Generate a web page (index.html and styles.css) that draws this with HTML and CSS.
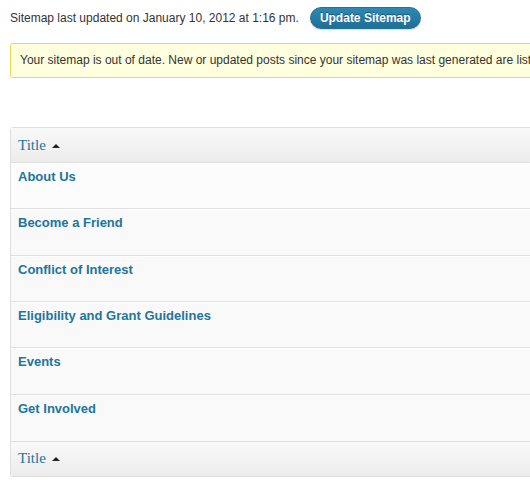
FILE: index.html
```html
<!DOCTYPE html>
<html>
<head>
<meta charset="utf-8">
<link rel="stylesheet" href="styles.css">
</head>
<body>
<div class="wrap">
  <div class="status">
    <span class="status-text">Sitemap last updated on January 10, 2012 at 1:16 pm.</span>
    <button class="btn-primary">Update Sitemap</button>
  </div>
  <div class="notice">Your sitemap is out of date. New or updated posts since your sitemap was last generated are listed below.</div>
  <table class="list">
    <thead>
      <tr><th><a href="#" class="sort">Title <span class="arrow"></span></a></th></tr>
    </thead>
    <tbody>
      <tr><td><a href="#" class="row-title">About Us</a></td></tr>
      <tr><td><a href="#" class="row-title">Become a Friend</a></td></tr>
      <tr><td><a href="#" class="row-title">Conflict of Interest</a></td></tr>
      <tr><td><a href="#" class="row-title">Eligibility and Grant Guidelines</a></td></tr>
      <tr><td><a href="#" class="row-title">Events</a></td></tr>
      <tr><td><a href="#" class="row-title">Get Involved</a></td></tr>
    </tbody>
    <tfoot>
      <tr><th><a href="#" class="sort">Title <span class="arrow"></span></a></th></tr>
    </tfoot>
  </table>
</div>
</body>
</html>
```
FILE: styles.css
```css
html, body {
  margin: 0;
  padding: 0;
  overflow: hidden;
  background: #fff;
}
body {
  font-family: "Liberation Sans", Arial, sans-serif;
  font-size: 12px;
  color: #333;
}
.wrap {
  width: 800px;
  padding-left: 10px;
}
.status {
  display: flex;
  align-items: center;
  margin-top: 7px;
  height: 22px;
}
.status-text {
  color: #333;
  font-size: 12px;
}
.btn-primary {
  margin-left: 11px;
  height: 22px;
  padding: 0 9px;
  border: 1px solid #21759b;
  border-radius: 11px;
  background: linear-gradient(#2e88b4, #1f6f96);
  color: #fff;
  font-family: "Liberation Sans", Arial, sans-serif;
  font-weight: bold;
  font-size: 12px;
  text-shadow: 0 -1px 0 rgba(0,0,0,0.35);
  box-shadow: 0 1px 1px rgba(0,0,0,0.15);
}
.notice {
  margin-top: 14px;
  border: 1px solid #e6db55;
  border-radius: 3px;
  background: #ffffe0;
  padding: 8px 9px;
  line-height: 17px;
  font-size: 12px;
  white-space: nowrap;
  color: #333;
}
.list {
  margin-top: 49px;
  width: 780px;
  border: 1px solid #dfdfdf;
  border-radius: 3px;
  border-spacing: 0;
  background: #f9f9f9;
  box-shadow: 0 1px 1px rgba(0,0,0,0.05);
}
.list th {
  text-align: left;
  height: 34px;
  padding: 0 7px;
  background: linear-gradient(#f9f9f9, #ececec);
  font-weight: normal;
}
.list thead th {
  border-bottom: 1px solid #dfdfdf;
}
.list tfoot th {
  border-top: 1px solid #dfdfdf;
}
.sort {
  font-family: "Liberation Serif", Georgia, serif;
  font-size: 15px;
  color: #21759b;
  text-decoration: none;
  display: inline-flex;
  align-items: center;
}
.arrow {
  display: inline-block;
  margin-left: 6px;
  margin-top: 1px;
  width: 0;
  height: 0;
  border-left: 4px solid transparent;
  border-right: 4px solid transparent;
  border-bottom: 4px solid #222;
}
.list td {
  height: 46.33px;
  padding: 4px 7px 0;
  vertical-align: top;
  box-sizing: border-box;
  border-top: 1px solid #fff;
  border-bottom: 1px solid #dfdfdf;
  line-height: 18px;
}
.list tbody tr:first-child td {
  background: #fcfcfc;
}
.list tbody tr:last-child td {
  border-bottom: none;
}
.row-title {
  font-weight: bold;
  font-size: 13px;
  color: #21759b;
  text-decoration: none;
}
```
